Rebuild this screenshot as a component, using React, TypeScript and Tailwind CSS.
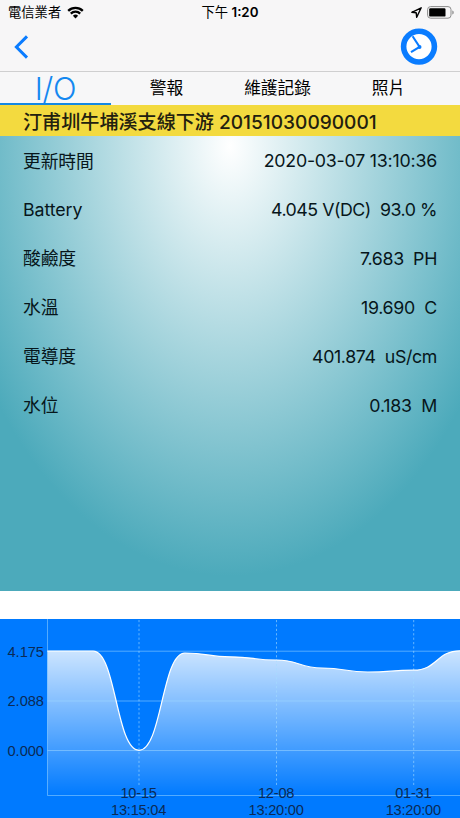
import React from "react";

const tabs = [
  { id: "io", name: "I/O" },
  { id: "alarm", name: "警報" },
  { id: "maintenance", name: "維護記錄" },
  { id: "photo", name: "照片" },
];

const readings = [
  { name: "更新時間", value: "2020-03-07 13:10:36", tracking: "tracking-[-0.22px]" },
  { name: "Battery", value: "4.045 V(DC)  93.0 %", tracking: "tracking-[-0.48px]" },
  { name: "酸鹼度", value: "7.683  PH", tracking: "tracking-[-0.35px]" },
  { name: "水溫", value: "19.690  C", tracking: "tracking-[-0.3px]" },
  { name: "電導度", value: "401.874  uS/cm", tracking: "tracking-[-0.38px]" },
  { name: "水位", value: "0.183  M", tracking: "tracking-[-0.25px]" },
];

const points = [
  [47.4, 32.2],
  [93.2, 32.2],
  [139, 131.3],
  [184.8, 34],
  [230.5, 37.8],
  [276.3, 41],
  [322.1, 49],
  [367.9, 53],
  [413.7, 51.2],
  [460, 31.8],
];

const yLabels = [
  { y: 32.5, text: "4.175" },
  { y: 82, text: "2.088" },
  { y: 131.5, text: "0.000" },
];

const xLabels = [
  { x: 139, date: "10-15", time: "13:15:04" },
  { x: 276.5, date: "12-08", time: "13:20:00" },
  { x: 413.7, date: "01-31", time: "13:20:00" },
];

const line = points
  .map(([x, y], i) => {
    if (i === 0) return `M${x} ${y}`;
    const [px, py] = points[i - 1];
    const mid = (px + x) / 2;
    return `C${mid} ${py} ${mid} ${y} ${x} ${y}`;
  })
  .join(" ");

function StatusBar() {
  return (
    <div className="grid h-6 grid-cols-3 items-center px-2 text-[13.3px] text-black">
      <div className="flex items-center gap-[6px]">
        <span className="pt-px">電信業者</span>
        <svg width="17" height="13" viewBox="0 0 17 13">
          <path d="M8.5 12.4 5.9 9.8a3.7 3.7 0 0 1 5.2 0Z" fill="#000" />
          <path
            d="M3.8 7.6a6.7 6.7 0 0 1 9.4 0M1.2 4.9a10.4 10.4 0 0 1 14.6 0"
            fill="none"
            stroke="#000"
            strokeWidth="2.3"
          />
        </svg>
      </div>
      <div className="pt-[2px] text-center font-semibold whitespace-nowrap">
        <span className="font-normal">下午</span> 1:20
      </div>
      <div className="-mr-[2px] flex items-center justify-end gap-[5px]">
        <svg width="11" height="11" viewBox="0 0 11 11">
          <path
            d="M10.2.8.8 5.3l4.4.5.5 4.5Z"
            fill="none"
            stroke="#000"
            strokeWidth="1.4"
            strokeLinejoin="round"
          />
        </svg>
        <svg width="27" height="13" viewBox="0 0 27 13">
          <rect x=".6" y=".6" width="23.4" height="11.6" rx="3" fill="none" stroke="#8b8b8b" />
          <rect x="2.2" y="2.2" width="16.3" height="8.4" rx="1.2" fill="#000" />
          <path d="M25.3 4.4v4c1-.3 1.4-1 1.4-2s-.4-1.7-1.4-2Z" fill="#8b8b8b" />
        </svg>
      </div>
    </div>
  );
}

function NavBar() {
  return (
    <div className="flex h-12 items-center justify-between border-b border-[#cfcfd0] pr-[22px] pb-px pl-[13px]">
      <button>
        <svg width="17" height="24" viewBox="0 0 17 24">
          <path d="M14 1.4 3.4 12 14 22.6" fill="none" stroke="#0a7cff" strokeWidth="3" />
        </svg>
      </button>
      <button>
        <svg width="38" height="38" viewBox="0 0 38 38">
          <circle cx="19" cy="18.600" r="15.4" fill="#fff" stroke="#0a7cff" strokeWidth="5.6" />
          <circle cx="19.6" cy="19" r="1.9" fill="#0a7cff" />
          <path
            d="M12.6 8.200 19.6 19 11 24.200"
            fill="none"
            stroke="#0a7cff"
            strokeWidth="2.1"
          />
        </svg>
      </button>
    </div>
  );
}

function Tabs() {
  return (
    <div className="flex h-[33px] bg-[#f7f7f8]">
      {tabs.map((tab) =>
        tab.id === "io" ? (
          <div
            key={tab.id}
            className="flex h-[33px] w-[111px] items-center justify-center border-b-2 border-[#1488e4] pt-px text-[31px] leading-none font-[350] tracking-[-0.3px] text-[#1488f0]"
          >
            {tab.name}
          </div>
        ) : (
          <div
            key={tab.id}
            className="flex w-[111px] items-center justify-center pt-px text-[16.7px] text-black"
          >
            {tab.name}
          </div>
        )
      )}
    </div>
  );
}

function Chart() {
  return (
    <svg
      className="block bg-[#007aff] font-['Liberation_Sans',sans-serif]"
      width="460"
      height="199"
      viewBox="0 0 460 199"
    >
      <defs>
        <linearGradient id="area" gradientUnits="userSpaceOnUse" x1="0" y1="32" x2="0" y2="177">
          <stop offset="0" stopColor="#fff" stopOpacity="0.8" />
          <stop offset="1" stopColor="#fff" stopOpacity="0" />
        </linearGradient>
      </defs>
      <path d={`${line} V177 H47.4 Z`} fill="url(#area)" />
      <path
        d="M47.5 0V176.5H460M47.5 32.2H460M47.5 82H460M47.5 131.5H460"
        fill="none"
        stroke="#a5dcff"
        strokeOpacity="0.5"
      />
      {xLabels.map((label) => (
        <path
          key={label.date}
          d={`M${label.x} 1V168`}
          stroke="#a5dcff"
          strokeOpacity="0.6"
          strokeDasharray="2.2 2.2"
        />
      ))}
      <path d={line} fill="none" stroke="#fff" strokeWidth="1.2" />
      <g fill="#0b2a55" fontSize="14.6">
        {yLabels.map((label) => (
          <text key={label.text} x="44" y={label.y + 5} textAnchor="end">
            {label.text}
          </text>
        ))}
        {xLabels.map((label) => (
          <text key={label.date} textAnchor="middle" letterSpacing="-0.2">
            <tspan x={label.x - 0.4} y="179">
              {label.date}
            </tspan>
            <tspan x={label.x - 0.4} y="196">
              {label.time}
            </tspan>
          </text>
        ))}
      </g>
    </svg>
  );
}

export default function App() {
  return (
    <div className="h-[818px] w-[460px] overflow-hidden bg-white font-['Inter','Noto_Sans_CJK_TC',sans-serif]">
      <div className="bg-[#f7f6f7]">
        <StatusBar />
        <NavBar />
      </div>
      <Tabs />
      <div className="flex h-[31px] items-center bg-[#f3da3f] px-[23px] pt-[3px] text-[19.1px] font-medium whitespace-nowrap text-[#22200f]">
        汀甫圳牛埔溪支線下游 20151030090001
      </div>
      <div className="h-[455px] bg-[radial-gradient(290px_430px_at_230px_10px,#fff,#4caabb)] px-[23px] pt-px text-[17.8px] text-[#07161b]">
        {readings.map((reading) => (
          <div key={reading.name} className="flex h-[48.9px] items-center justify-between">
            <span className="pt-px tracking-[-0.1px]">{reading.name}</span>
            <span className={`whitespace-pre ${reading.tracking}`}>{reading.value}</span>
          </div>
        ))}
      </div>
      <div className="h-7 bg-white" />
      <Chart />
    </div>
  );
}
